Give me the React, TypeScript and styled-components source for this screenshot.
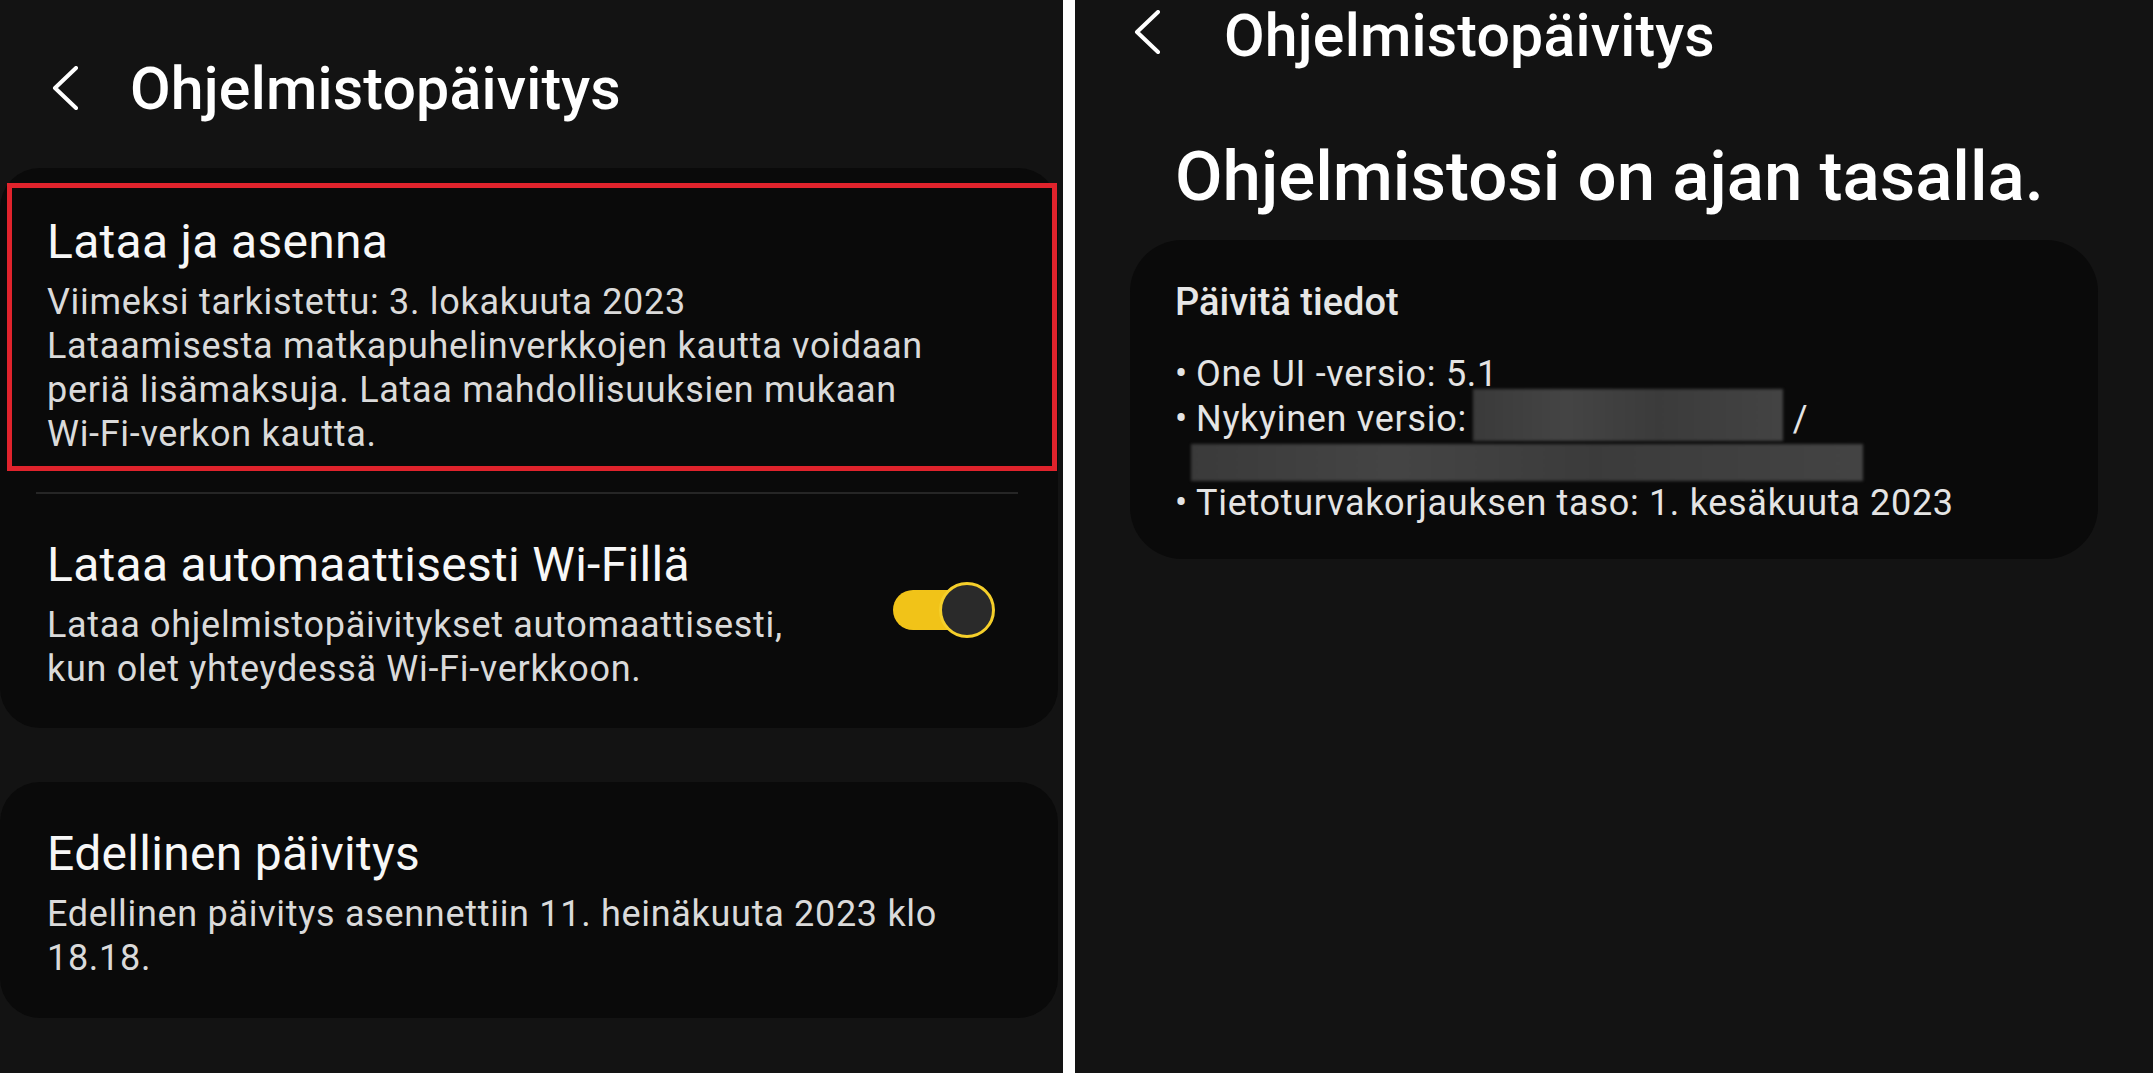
import React from "react";
import styled, { createGlobalStyle } from "styled-components";

const Global = createGlobalStyle`
  html, body { margin: 0; padding: 0; background: #131313; }
  body { font-family: Roboto, "Noto Sans", "Liberation Sans", sans-serif; -webkit-font-smoothing: antialiased; }
  * { box-sizing: border-box; }
`;

const Page = styled.div`
  display: flex;
  width: 2153px;
  height: 1073px;
  overflow: hidden;
  background: #131313;
`;

const Panel = styled.section<{ $w?: number }>`
  ${(p) => (p.$w ? `width: ${p.$w}px; flex: none;` : "flex: 1;")}
  display: flex;
  flex-direction: column;
  background: #131313;
  overflow: hidden;
`;

const Divider = styled.div`
  width: 12px;
  flex: none;
  background: #ffffff;
`;

const Header = styled.header<{ $pt: number; $pl: number; $gap: number; $h: number }>`
  display: flex;
  align-items: flex-start;
  gap: ${(p) => p.$gap}px;
  padding: ${(p) => p.$pt}px 0 0 ${(p) => p.$pl}px;
  height: ${(p) => p.$h}px;
  flex: none;
`;

const BackIcon = styled.svg<{ $mt: number }>`
  width: 28px;
  height: 44px;
  margin-top: ${(p) => p.$mt}px;
  flex: none;
`;

const HeaderTitle = styled.h1`
  margin: 0;
  font-size: 59px;
  line-height: 66px;
  font-weight: 500;
  color: #ffffff;
  letter-spacing: 0.2px;
  white-space: nowrap;
`;

const Card = styled.div<{ $mt: number; $pt: number; $pb: number }>`
  margin: ${(p) => p.$mt}px 5px 0 0;
  padding: ${(p) => p.$pt}px 0 ${(p) => p.$pb}px 0;
  background: #0a0a0a;
  border-radius: 40px;
  flex: none;
`;

const Highlighted = styled.div`
  margin: 0 1px 0 7px;
  border: 5px solid #e0232c;
  padding: 27px 20px 10px 35px;
`;

const Row = styled.div<{ $pt?: number }>`
  display: flex;
  align-items: center;
  justify-content: space-between;
  padding: ${(p) => p.$pt ?? 0}px 63px 0 47px;
`;

const RowText = styled.div`
  display: flex;
  flex-direction: column;
  gap: 11px;
`;

const ItemTitle = styled.div`
  font-size: 48px;
  line-height: 54px;
  font-weight: 400;
  color: #f7f7f7;
  letter-spacing: 0.3px;
  white-space: nowrap;
`;

const ItemSub = styled.div`
  font-size: 36px;
  line-height: 44px;
  color: #dadada;
  letter-spacing: 0.7px;
  white-space: nowrap;
`;

const Separator = styled.hr`
  margin: 21px 40px 0 36px;
  border: none;
  height: 2px;
  background: #262626;
`;

const Toggle = styled.div`
  position: relative;
  width: 102px;
  height: 56px;
  flex: none;
  display: flex;
  align-items: center;
  margin-top: -10px;
`;

const Track = styled.div`
  width: 90px;
  height: 40px;
  border-radius: 20px;
  background: #f1c318;
`;

const Thumb = styled.div`
  position: absolute;
  right: 0;
  top: 0;
  width: 56px;
  height: 56px;
  border-radius: 50%;
  background: #2a2a2a;
  border: 3px solid #f5cf2a;
`;

const BigHeading = styled.h2`
  margin: 68px 0 0 100px;
  font-size: 69px;
  line-height: 80px;
  font-weight: 500;
  color: #ffffff;
  letter-spacing: 0px;
  white-space: nowrap;
`;

const InfoCard = styled.div`
  margin: 23px 0 0 55px;
  width: 968px;
  padding: 40px 40px 34px 45px;
  background: #0a0a0a;
  border-radius: 52px;
`;

const InfoTitle = styled.div`
  font-size: 38px;
  line-height: 44px;
  font-weight: 500;
  color: #e6e6e6;
  letter-spacing: 0px;
  margin-bottom: 28px;
`;

const InfoLine = styled.div`
  display: flex;
  align-items: center;
  font-size: 36px;
  line-height: 44px;
  color: #e4e4e4;
  letter-spacing: 0.7px;
  white-space: nowrap;
`;

const Bullet = styled.span`
  width: 21px;
  flex: none;
`;

const Redacted = styled.span<{ $w: number; $h: number; $ml: number; $mt: number }>`
  display: inline-block;
  align-self: flex-start;
  width: ${(p) => p.$w}px;
  height: ${(p) => p.$h}px;
  margin: ${(p) => p.$mt}px 0 0 ${(p) => p.$ml}px;
  background: linear-gradient(90deg, #3a3a3a, #444 30%, #3b3b3b 60%, #434343);
  filter: blur(1.5px);
  flex: none;
`;

const Slash = styled.span`
  margin-left: 10px;
`;

const Back = ({ mt }: { mt: number }) => (
  <BackIcon $mt={mt} viewBox="0 0 28 44">
    <polyline
      points="25,2 4,22 25,42"
      fill="none"
      stroke="#ffffff"
      strokeWidth="4"
      strokeLinecap="round"
      strokeLinejoin="round"
    />
  </BackIcon>
);

export default function App() {
  return (
    <>
      <Global />
      <Page>
        <Panel $w={1063}>
          <Header $pt={56} $pl={51} $gap={51} $h={168}>
            <Back mt={10} />
            <HeaderTitle>Ohjelmistopäivitys</HeaderTitle>
          </Header>
          <Card $mt={0} $pt={15} $pb={37}>
            <Highlighted>
              <RowText>
                <ItemTitle>Lataa ja asenna</ItemTitle>
                <div>
                  <ItemSub>Viimeksi tarkistettu: 3. lokakuuta 2023</ItemSub>
                  <ItemSub>Lataamisesta matkapuhelinverkkojen kautta voidaan</ItemSub>
                  <ItemSub>periä lisämaksuja. Lataa mahdollisuuksien mukaan</ItemSub>
                  <ItemSub>Wi-Fi-verkon kautta.</ItemSub>
                </div>
              </RowText>
            </Highlighted>
            <Separator />
            <Row $pt={44}>
              <RowText>
                <ItemTitle>Lataa automaattisesti Wi-Fillä</ItemTitle>
                <div>
                  <ItemSub>Lataa ohjelmistopäivitykset automaattisesti,</ItemSub>
                  <ItemSub>kun olet yhteydessä Wi-Fi-verkkoon.</ItemSub>
                </div>
              </RowText>
              <Toggle>
                <Track />
                <Thumb />
              </Toggle>
            </Row>
          </Card>
          <Card $mt={54} $pt={45} $pb={38}>
            <Row>
              <RowText>
                <ItemTitle>Edellinen päivitys</ItemTitle>
                <div>
                  <ItemSub>Edellinen päivitys asennettiin 11. heinäkuuta 2023 klo</ItemSub>
                  <ItemSub>18.18.</ItemSub>
                </div>
              </RowText>
            </Row>
          </Card>
        </Panel>
        <Divider />
        <Panel>
          <Header $pt={3} $pl={58} $gap={63} $h={69}>
            <Back mt={7} />
            <HeaderTitle>Ohjelmistopäivitys</HeaderTitle>
          </Header>
          <BigHeading>Ohjelmistosi on ajan tasalla.</BigHeading>
          <InfoCard>
            <InfoTitle>Päivitä tiedot</InfoTitle>
            <InfoLine>
              <Bullet>•</Bullet>One UI -versio: 5.1
            </InfoLine>
            <InfoLine>
              <Bullet>•</Bullet>Nykyinen versio:
              <Redacted $w={310} $h={52} $ml={6} $mt={-7} />
              <Slash>/</Slash>
            </InfoLine>
            <InfoLine>
              <Redacted $w={672} $h={37} $ml={16} $mt={3} />
            </InfoLine>
            <InfoLine>
              <Bullet>•</Bullet>Tietoturvakorjauksen taso: 1. kesäkuuta 2023
            </InfoLine>
          </InfoCard>
        </Panel>
      </Page>
    </>
  );
}
